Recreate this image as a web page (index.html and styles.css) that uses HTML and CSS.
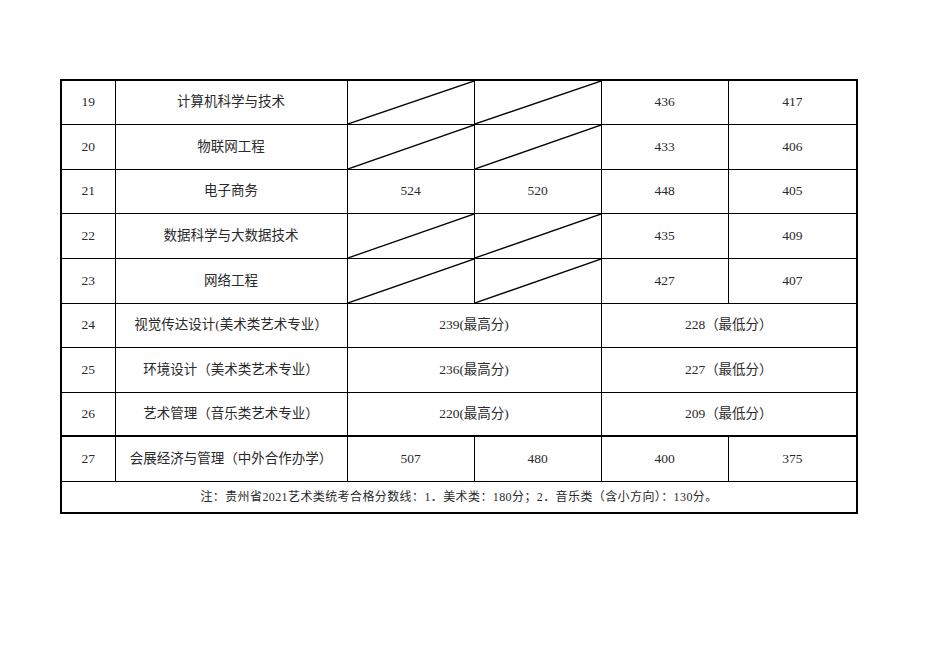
FILE: index.html
```html
<!DOCTYPE html>
<html lang="zh">
<head>
<meta charset="utf-8">
<link rel="stylesheet" href="styles.css">
</head>
<body>
<table class="grid">
  <colgroup>
    <col class="c-no"><col class="c-name"><col class="c-s"><col class="c-s"><col class="c-s"><col class="c-s2">
  </colgroup>
  <tbody>
    <tr class="h44"><td>19</td><td class="name">计算机科学与技术</td><td class="slash"></td><td class="slash"></td><td>436</td><td>417</td></tr>
    <tr class="h45"><td>20</td><td class="name">物联网工程</td><td class="slash"></td><td class="slash"></td><td>433</td><td>406</td></tr>
    <tr class="h44"><td>21</td><td class="name">电子商务</td><td>524</td><td>520</td><td>448</td><td>405</td></tr>
    <tr class="h45"><td>22</td><td class="name">数据科学与大数据技术</td><td class="slash"></td><td class="slash"></td><td>435</td><td>409</td></tr>
    <tr class="h45"><td>23</td><td class="name">网络工程</td><td class="slash"></td><td class="slash"></td><td>427</td><td>407</td></tr>
    <tr class="h44"><td>24</td><td class="name">视觉传达设计(美术类艺术专业）</td><td colspan="2">239(最高分)</td><td colspan="2">228（最低分）</td></tr>
    <tr class="h45"><td>25</td><td class="name">环境设计（美术类艺术专业）</td><td colspan="2">236(最高分)</td><td colspan="2">227（最低分）</td></tr>
    <tr class="h44 before-thick"><td>26</td><td class="name">艺术管理（音乐类艺术专业）</td><td colspan="2">220(最高分)</td><td colspan="2">209（最低分）</td></tr>
    <tr class="h45"><td>27</td><td class="name">会展经济与管理（中外合作办学）</td><td>507</td><td>480</td><td>400</td><td>375</td></tr>
    <tr class="note-row"><td colspan="6" class="note">注：贵州省2021艺术类统考合格分数线：1．美术类：180分；2．音乐类（含小方向）：130分。</td></tr>
  </tbody>
</table>
</body>
</html>
```
FILE: styles.css
```css
html, body {
  margin: 0;
  padding: 0;
  background: #ffffff;
}
body {
  padding: 79px 0 0 60px;
  font-family: "Liberation Serif", "Noto Sans CJK SC", serif;
  color: #2a2a2a;
}
.grid {
  border-collapse: collapse;
  table-layout: fixed;
  width: 796px;
  border: 2px solid #000;
}
.c-no { width: 54px; }
.c-name { width: 232px; }
.c-s { width: 127px; }
.c-s2 { width: 129px; }
.grid td {
  border: 1px solid #000;
  text-align: center;
  vertical-align: middle;
  padding: 0;
  font-size: 13.5px;
  line-height: 16px;
}
.grid tr:first-child td { border-top: 2px solid #000; }
.grid td:first-child { border-left: 2px solid #000; }
.grid td:last-child { border-right: 2px solid #000; }
.h45 { height: 45px; }
.h44 { height: 44px; }
.note-row { height: 32px; }
.before-thick td { border-bottom: 2px solid #000; }
.grid td.note {
  font-size: 12px;
  letter-spacing: 0.4px;
  border-bottom: 2px solid #000;
  border-left: 2px solid #000;
  border-right: 2px solid #000;
}
.grid td.slash {
  background-image: url("data:image/svg+xml;utf8,<svg xmlns='http://www.w3.org/2000/svg' viewBox='0 0 100 100' preserveAspectRatio='none'><line x1='0' y1='100' x2='100' y2='0' stroke='black' stroke-width='1.3' vector-effect='non-scaling-stroke'/></svg>");
  background-size: 100% 100%;
  background-repeat: no-repeat;
}
```
